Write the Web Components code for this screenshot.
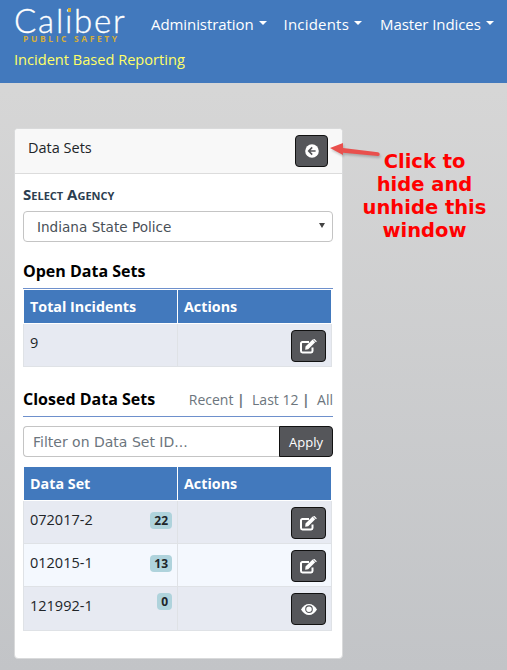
<!DOCTYPE html>
<html>
<head>
<meta charset="utf-8">
<title>Data Sets</title>
<style>
  html, body { height: 100%; }
  body {
    margin: 0;
    height: 670px;
    overflow: hidden;
    display: flex;
    flex-direction: column;
    background: linear-gradient(180deg, #d6d6d6 0, #d6d6d6 90px, #c2c4c7 100%);
    font-family: "Open Sans", "Noto Sans", sans-serif;
    color: #212529;
    position: relative;
  }
</style>
</head>
<body>
<app-header>
  <nav-item>Administration</nav-item>
  <nav-item style="letter-spacing:.2px">Incidents</nav-item>
  <nav-item style="margin-left:1px">Master Indices</nav-item>
</app-header>

<data-panel heading="Data Sets">
  <agency-select label="Select Agency" value="Indiana State Police"></agency-select>

  <section-title>Open Data Sets</section-title>
  <data-table first="Total Incidents">
    <data-row name="9" icon="edit"></data-row>
  </data-table>

  <section-title class="closed">
    Closed Data Sets
    <span slot="links">Recent <b>|</b>&nbsp; Last 12 <b>|</b>&nbsp; All</span>
  </section-title>
  <filter-box placeholder="Filter on Data Set ID..."></filter-box>
  <data-table first="Data Set">
    <data-row name="072017-2" count="22" icon="edit"></data-row>
    <data-row name="012015-1" count="13" icon="edit" light></data-row>
    <data-row name="121992-1" count="0" icon="eye" raised></data-row>
  </data-table>
</data-panel>

<call-out>Click to<br>hide and<br>unhide this<br>window</call-out>

<script>
const ICONS = {
  edit: `<svg width="17" height="15" viewBox="0 0 17 15">
      <path d="M12.500 8.500v3.600a1.400 1.400 0 0 1-1.400 1.400H2.400A1.400 1.400 0 0 1 1 12.100V4.400A1.400 1.400 0 0 1 2.400 3H9" fill="none" stroke="#fff" stroke-width="2"/>
      <path d="M5.500 7.600 12.600.6l2.600 2.600-7 7.100-3 .4zM13.400 0l.9-.2 2.400 2.400-.3.9-.4.2L13.200.4z" fill="#fff"/>
    </svg>`,
  eye: `<svg width="16" height="11" viewBox="0 0 16 11">
      <path d="M0 5.500C2 2 4.800 0 8 0s6 2 8 5.500C14 9 11.200 11 8 11S2 9 0 5.500z" fill="#fff"/>
      <circle cx="8" cy="5.200" r="3.300" fill="none" stroke="#55565a" stroke-width="1.100"/>
    </svg>`,
  back: `<svg width="14" height="14" viewBox="0 0 14 14">
      <circle cx="7" cy="7" r="6.800" fill="#fff"/>
      <path d="M7.200 3.400 3.700 7l3.500 3.600M4 7h6.600" fill="none" stroke="#55565a" stroke-width="1.600"/>
    </svg>`
};

class AppHeader extends HTMLElement {
  connectedCallback() {
    this.attachShadow({ mode: 'open' });
    this.shadowRoot.innerHTML = `
      <style>
        :host { display: block; height: 83px; box-sizing: border-box; padding: 5px 13px 0 14px; background: #4279bd; }
        .top { display: flex; height: 42px; }
        .logo { width: 112px; color: #fff; position: relative; }
        .brand { display: block; font: 300 33px/30px Lato, "Open Sans", sans-serif; letter-spacing: 1.800px; -webkit-text-stroke: .35px #fff; }
        .gold { position: absolute; left: 54px; top: 3px; width: 3px; height: 4px; background: #d4ad3a; }
        .sub { display: block; font: 700 8.500px/9px "Open Sans", sans-serif; letter-spacing: 2.600px; color: #d4ad3a; margin: -1px 0 0 9px; white-space: nowrap; }
        nav { display: flex; gap: 17px; margin-left: 25px; padding-top: 8px; }
        .tag { margin-top: 2px; font-size: 14.600px; line-height: 20px; color: #ffff66; }
      </style>
      <div class="top">
        <div class="logo"><span class="brand">Caliber</span><i class="gold"></i><span class="sub">PUBLIC SAFETY</span></div>
        <nav><slot></slot></nav>
      </div>
      <div class="tag">Incident Based Reporting</div>
    `;
  }
}

class NavItem extends HTMLElement {
  connectedCallback() {
    this.attachShadow({ mode: 'open' });
    this.shadowRoot.innerHTML = `
      <style>
        :host { display: flex; color: #fff; font-size: 15px; letter-spacing: -.08px; line-height: 22px; white-space: nowrap; }
        i { width: 0; height: 0; margin: 8px 0 0 5px; border: 4.500px solid transparent; border-top-color: #fff; border-bottom: 0; }
      </style>
      <slot></slot><i></i>
    `;
  }
}

class DataPanel extends HTMLElement {
  connectedCallback() {
    this.attachShadow({ mode: 'open' });
    this.shadowRoot.innerHTML = `
      <style>
        :host { display: block; width: 329px; height: 531px; box-sizing: border-box; margin: 45px 0 0 14px; background: #fff; border: 1px solid #d9dadb; border-radius: 4px; overflow: hidden; }
        header { display: flex; justify-content: space-between; height: 45px; box-sizing: border-box; padding: 6px 14px 0 13px; background: #f8f8f8; border-bottom: 1px solid #dcdcdc; }
        h2 { margin: 3px 0 0; font-size: 14.500px; line-height: 19px; font-weight: 400; color: #212529; }
        .body { padding: 11px 9px 0 8px; }
      </style>
      <header><h2>${this.getAttribute('heading')}</h2><action-button icon="back"></action-button></header>
      <div class="body"><slot></slot></div>
    `;
  }
}

class AgencySelect extends HTMLElement {
  connectedCallback() {
    this.attachShadow({ mode: 'open' });
    this.shadowRoot.innerHTML = `
      <style>
        :host { display: block; }
        label { display: block; font-size: 15px; line-height: 19px; font-weight: 700; font-variant: small-caps; color: #2c3e50; }
        .box { display: flex; justify-content: space-between; margin-top: 7px; height: 31px; box-sizing: border-box; padding: 0 7px 0 13px; border: 1px solid #c4c4c4; border-radius: 4px; font: 13.600px/30px "DejaVu Sans", sans-serif; color: #495057; }
        i { width: 0; height: 0; margin-top: 11px; border: 3px solid transparent; border-top: 5px solid #444; border-bottom: 0; }
      </style>
      <label>${this.getAttribute('label')}</label>
      <div class="box"><span>${this.getAttribute('value')}</span><i></i></div>
    `;
  }
}

class SectionTitle extends HTMLElement {
  connectedCallback() {
    this.attachShadow({ mode: 'open' });
    this.shadowRoot.innerHTML = `
      <style>
        :host { display: flex; justify-content: space-between; align-items: baseline; height: 29px; box-sizing: border-box; margin-top: 18px; border-bottom: 1px solid #6e90cc; font-size: 16px; line-height: 22px; font-weight: 700; color: #000; }
        :host(.closed) { margin-top: 21px; height: 29px; }
        ::slotted([slot=links]) { font-size: 14px; font-weight: 400; color: #6c757d; }
      </style>
      <slot></slot><slot name="links"></slot>
    `;
  }
}

class DataTable extends HTMLElement {
  connectedCallback() {
    this.attachShadow({ mode: 'open' });
    this.shadowRoot.innerHTML = `
      <style>
        :host { display: block; width: 309px; }
        .head { display: grid; grid-template-columns: 153px 1fr; height: 33px; margin: 1px 0 1px 1px; width: 307px; font-size: 14.300px; line-height: 34px; font-weight: 700; color: #fff; background: #4279bd; }
        .head span { padding-left: 6px; }
        .head span + span { border-left: 1px solid #fff; }
      </style>
      <div class="head"><span>${this.getAttribute('first')}</span><span>Actions</span></div>
      <slot></slot>
    `;
  }
}

class DataRow extends HTMLElement {
  connectedCallback() {
    this.attachShadow({ mode: 'open' });
    const count = this.getAttribute('count');
    this.shadowRoot.innerHTML = `
      <style>
        :host { display: grid; grid-template-columns: 153px 1fr; height: 43px; box-sizing: border-box; background: #e7eaf2; border: 1px solid #dfe2e6; border-top: 0; font-size: 14.500px; color: #212529; }
        :host([light]) { background: #f4f8fe; }
        :host([raised]) { height: 44px; }
        .name { display: flex; justify-content: space-between; padding: 8px 5px 0 6px; line-height: 22px; }
        .act { display: flex; justify-content: flex-end; padding: 6px 5px 0 0; border-left: 1px solid #dfe2e6; }
        count-badge { margin-top: 3px; }
        :host([raised]) count-badge { margin-top: -2px; }
      </style>
      <div class="name"><span>${this.getAttribute('name')}</span>${count !== null ? `<count-badge>${count}</count-badge>` : ''}</div>
      <div class="act"><action-button icon="${this.getAttribute('icon')}"></action-button></div>
    `;
  }
}

class CountBadge extends HTMLElement {
  connectedCallback() {
    this.attachShadow({ mode: 'open' });
    this.shadowRoot.innerHTML = `
      <style>
        :host { display: block; height: 17px; box-sizing: border-box; padding: 0 4px; border-radius: 4px; background: #afd3dc; font-size: 12px; line-height: 17px; font-weight: 700; color: #212529; }
      </style>
      <slot></slot>
    `;
  }
}

class ActionButton extends HTMLElement {
  connectedCallback() {
    this.attachShadow({ mode: 'open' });
    this.shadowRoot.innerHTML = `
      <style>
        :host { display: flex; align-items: center; justify-content: center; width: 35px; height: 32px; box-sizing: border-box; background: #55565a; border: 1px solid #111; border-radius: 4px; }
        :host([icon=back]) { width: 33px; }
        svg { display: block; }
      </style>
      ${ICONS[this.getAttribute('icon')]}
    `;
  }
}

class FilterBox extends HTMLElement {
  connectedCallback() {
    this.attachShadow({ mode: 'open' });
    this.shadowRoot.innerHTML = `
      <style>
        :host { display: flex; height: 31px; margin: 9px 0 10px; width: 310px; }
        .input { flex: 1; box-sizing: border-box; padding-left: 9px; font: 14px/30px "DejaVu Sans", sans-serif; color: #6c757d; border: 1px solid #c4c4c4; border-right: 0; border-radius: 4px 0 0 4px; }
        .apply { width: 54px; box-sizing: border-box; text-align: center; font-size: 13px; line-height: 31px; color: #fff; background: #55565a; border: 1px solid #111; border-radius: 0 4px 4px 0; }
      </style>
      <div class="input">${this.getAttribute('placeholder')}</div>
      <div class="apply">Apply</div>
    `;
  }
}

class CallOut extends HTMLElement {
  connectedCallback() {
    this.attachShadow({ mode: 'open' });
    this.shadowRoot.innerHTML = `
      <style>
        :host { position: absolute; left: 330px; top: 137px; width: 170px; }
        svg { position: absolute; left: 0; top: 0; filter: drop-shadow(1px 2px 1px rgba(0,0,0,.2)); }
        div { position: absolute; left: 20px; top: 13px; width: 149px; text-align: center; font: 700 19.500px/23px "DejaVu Sans", sans-serif; color: #f00; }
      </style>
      <svg width="55" height="25" viewBox="0 0 55 25">
        <path d="M0 11 13 6v5l35 4.300a1.900 1.900 0 0 1-.4 3.800L13 15.700V18z" fill="#e9504d"/>
      </svg>
      <div><slot></slot></div>
    `;
  }
}

customElements.define('app-header', AppHeader);
customElements.define('nav-item', NavItem);
customElements.define('data-panel', DataPanel);
customElements.define('agency-select', AgencySelect);
customElements.define('section-title', SectionTitle);
customElements.define('data-table', DataTable);
customElements.define('data-row', DataRow);
customElements.define('count-badge', CountBadge);
customElements.define('action-button', ActionButton);
customElements.define('filter-box', FilterBox);
customElements.define('call-out', CallOut);
</script>
</body>
</html>
